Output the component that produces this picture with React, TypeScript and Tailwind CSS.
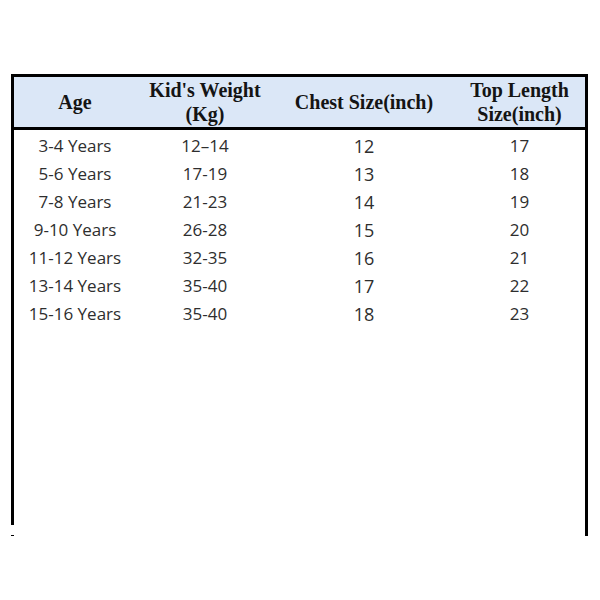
import React from "react";

const rows = [
  ["3-4 Years", "12\u201314", "12", "17"],
  ["5-6 Years", "17-19", "13", "18"],
  ["7-8 Years", "21-23", "14", "19"],
  ["9-10 Years", "26-28", "15", "20"],
  ["11-12 Years", "32-35", "16", "21"],
  ["13-14 Years", "35-40", "17", "22"],
  ["15-16 Years", "35-40", "18", "23"],
];

const cols = ["w-[122px]", "w-[138px]", "w-[180px]", "w-[131px]"];

export default function App() {
  return (
    <div className="w-[600px] h-[600px] bg-white overflow-hidden">
      <div className="relative ml-[11px] mt-[74px] w-[577px] h-[462px] border-t-[3px] border-l-[3px] border-r-[3px] border-black">
        <div className="flex h-[50px] bg-[#dbe7f7] border-b-[3px] border-black box-content font-['Liberation_Serif',serif] font-bold text-[20px] leading-[24px] text-[#141414]">
          <div className={`${cols[0]} flex items-center justify-center text-center`}>Age</div>
          <div className={`${cols[1]} flex items-center justify-center text-center`}>
            Kid's Weight
            <br />
            (Kg)
          </div>
          <div className={`${cols[2]} flex items-center justify-center text-center`}>Chest Size(inch)</div>
          <div className={`${cols[3]} flex items-center justify-center text-center`}>
            Top Length
            <br />
            Size(inch)
          </div>
        </div>
        <div className="pt-[2px] font-['Open_Sans',sans-serif] text-[17px] text-[#2e2e2e]">
          {rows.map((r, i) => (
            <div key={i} className="flex h-[28px] items-center">
              {r.map((c, j) => (
                <div key={j} className={`${cols[j]} text-center ${j === 2 ? "text-[18px]" : ""}`}>
                  {c}
                </div>
              ))}
            </div>
          ))}
        </div>
        <div className="absolute left-[-3px] top-[448px] w-[3px] h-[10px] bg-white" />
      </div>
    </div>
  );
}
